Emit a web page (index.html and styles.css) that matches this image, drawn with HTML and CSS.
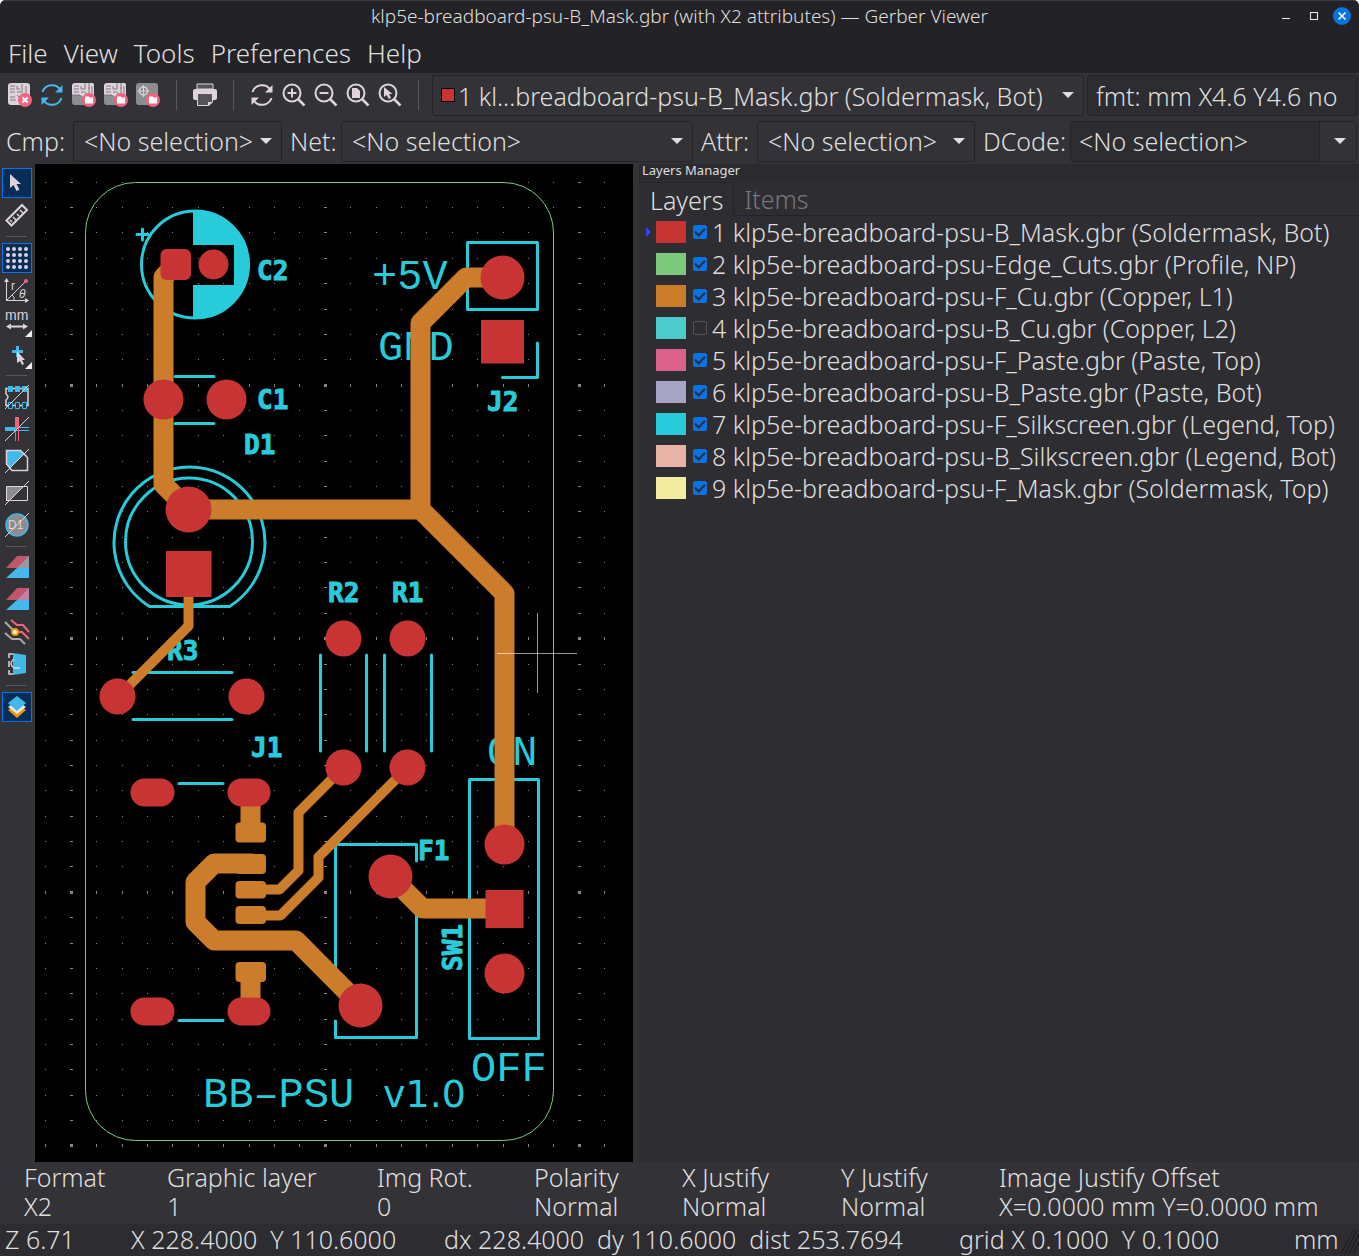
FILE: index.html
```html
<!DOCTYPE html>
<html lang="en">
<head>
<meta charset="utf-8">
<title>Gerber Viewer</title>
<link rel="stylesheet" href="styles.css">
</head>
<body>
<svg class="defs" aria-hidden="true">
  <symbol id="refresh" viewBox="0 0 24 24"><path d="M2.500 9A10 10 0 0 1 20.500 7M21.500 15A10 10 0 0 1 3.500 17" fill="none" stroke="currentColor" stroke-width="2"/><path d="M22.500 2v7.500h-7.500zM1.500 22v-7.500H9z" fill="currentColor"/></symbol>
  <symbol id="board" viewBox="0 0 24 24"><rect width="22" height="22" rx="3" fill="#8d8d8d"/><path d="M2 0h18a2 2 0 0 1 2 2v11h-6l-3 3-4-4H0V2z" fill="#ded3dd"/><path d="M2 3h5M2 6h5M2 9h5M9 3v3h4V0M9 9h4l2 3v4M17 0v10M20 3v8M0 12h8M16 5h2" stroke="#7e7a80" fill="none"/></symbol>
  <symbol id="folder" viewBox="0 0 24 24"><circle cx="17" cy="17" r="7" fill="#f2647e"/><path d="M13 13.500h3.500l1 1H21v6h-8z" fill="#fff"/></symbol>
  <symbol id="lens" viewBox="0 0 24 24"><circle cx="10" cy="10" r="8.500" fill="none" stroke="#ded3dd" stroke-width="2"/><path d="M16 16l6.500 6.500" stroke="#ded3dd" stroke-width="2.500"/></symbol>
  <symbol id="arrow" viewBox="0 0 12 6"><path d="M0 0h12L6 6z" fill="currentColor"/></symbol>
  <symbol id="pointer" viewBox="0 0 24 24"><path d="M7 4v14l3.500-3 3 6 3-1.500-3-5.500h4.500z" fill="#ded3dd"/></symbol>
</svg>
<div class="app">
  <header class="head">
    <div class="titlebar">
      <h1 class="title">klp5e-breadboard-psu-B_Mask.gbr (with X2 attributes) — Gerber Viewer</h1>
      <div class="window-buttons">
        <button class="win" aria-label="Minimize"><svg width="18" height="18"><path d="M5 11.500h8" stroke="#eee"/></svg></button>
        <button class="win" aria-label="Maximize"><svg width="18" height="18"><rect x="5.500" y="5.500" width="7" height="7" fill="none" stroke="#eee"/></svg></button>
        <button class="win" aria-label="Close"><svg width="18" height="18"><circle cx="9" cy="9" r="9" fill="#0b73df"/><path d="M5.500 5.500l7 7m0-7l-7 7" stroke="#fff" stroke-width="1.500"/></svg></button>
      </div>
    </div>
    <nav class="menu"><button>File</button><button>View</button><button>Tools</button><button>Preferences</button><button>Help</button></nav>
  </header>

  <div class="toolbar">
    <button class="tool" aria-label="Clear all layers"><svg class="icon"><rect width="22" height="22" rx="3" fill="#ded3dd"/><path d="M2 3h5M2 6h5M2 9h5M2 14h5M2 17h6M9 3v3h3M9 9h4M9 12l3 3M14 1v9M18 3v8" stroke="#7e7a80" fill="none"/><circle cx="17" cy="17" r="7" fill="#f2647e"/><path d="M14.500 14.500l5 5m0-5l-5 5" stroke="#fff" stroke-width="2"/></svg></button>
    <button class="tool blue" aria-label="Reload all layers"><svg class="icon"><use href="#refresh" width="24" height="24"/></svg></button>
    <button class="tool" aria-label="Open autodetected files"><svg class="icon"><use href="#board" width="24" height="24"/><use href="#folder" width="24" height="24"/></svg></button>
    <button class="tool" aria-label="Open Gerber files"><svg class="icon"><use href="#board" width="24" height="24"/><use href="#folder" width="24" height="24"/></svg></button>
    <button class="tool" aria-label="Open drill files"><svg class="icon"><rect width="22" height="22" rx="3" fill="#8d8d8d"/><circle cx="7.500" cy="8" r="4" fill="none" stroke="#ded3dd" stroke-width="1.500"/><path d="M7.500 2v12M1.500 8h12" stroke="#ded3dd"/><use href="#folder" width="24" height="24"/></svg></button>
    <span class="vsep"></span>
    <button class="tool" aria-label="Print"><svg class="icon"><path d="M4 1h16v5H4z" fill="#545357" stroke="#ded3dd"/><path d="M2 6h20a2 2 0 0 1 2 2v7a2 2 0 0 1-2 2H2a2 2 0 0 1-2-2V8a2 2 0 0 1 2-2z" fill="#ded3dd"/><path d="M4 11h16v8l-4 4H4z" fill="#545357"/><path d="M4.500 11v11.500h11l4-3.500v-8" fill="none" stroke="#ded3dd"/><path d="M15 23v-4h5z" fill="#ded3dd"/></svg></button>
    <span class="vsep"></span>
    <button class="tool pale" aria-label="Refresh"><svg class="icon"><use href="#refresh" width="24" height="24"/></svg></button>
    <button class="tool" aria-label="Zoom in"><svg class="icon"><use href="#lens" width="24" height="24"/><path d="M5.500 10h9M10 5.500v9" stroke="#ded3dd" stroke-width="2"/></svg></button>
    <button class="tool" aria-label="Zoom out"><svg class="icon"><use href="#lens" width="24" height="24"/><path d="M5.500 10h9" stroke="#ded3dd" stroke-width="2"/></svg></button>
    <button class="tool" aria-label="Zoom to fit"><svg class="icon"><use href="#lens" width="24" height="24"/><path d="M6 5h5l3 3v7H6z" fill="#ded3dd"/></svg></button>
    <button class="tool" aria-label="Zoom to selection"><svg class="icon"><use href="#lens" width="24" height="24"/><path d="M6 4v10l2.500-2 2.500 4 2-1-2-4h3.500z" fill="#ded3dd"/></svg></button>
    <span class="vsep"></span>
    <div class="fields">
      <div class="drop"><span class="chip"></span><select class="chipped" aria-label="Active layer"><option>1 kl...breadboard-psu-B_Mask.gbr (Soldermask, Bot)</option></select><svg class="arrow"><use href="#arrow"/></svg></div>
      <input class="box" aria-label="Format" readonly value="fmt: mm X4.6 Y4.6 no">
    </div>
  </div>

  <div class="filters">
    <label for="cmp">Cmp:</label>
    <div class="drop"><select id="cmp"><option>&lt;No selection&gt;</option></select><svg class="arrow"><use href="#arrow"/></svg></div>
    <label for="net">Net:</label>
    <div class="drop"><select id="net"><option>&lt;No selection&gt;</option></select><svg class="arrow"><use href="#arrow"/></svg></div>
    <label for="attr">Attr:</label>
    <div class="drop"><select id="attr"><option>&lt;No selection&gt;</option></select><svg class="arrow"><use href="#arrow"/></svg></div>
    <label for="dcode">DCode:</label>
    <div class="combo"><input id="dcode" value="&lt;No selection&gt;"><button aria-label="Show DCodes"><svg class="mark"><use href="#arrow"/></svg></button></div>
  </div>

  <main class="main">
    <div class="side">
      <button class="stool on" aria-label="Select"><svg class="icon"><use href="#pointer" x="-2" y="-1" width="24" height="24"/></svg></button>
      <button class="stool" aria-label="Measure"><svg class="icon"><path d="M1.500 17.500L17 2l5 5L6.500 22.500z" fill="none" stroke="#ded3dd" stroke-width="2"/><path d="M8 14l3 3M12 11l2 2M15 7l3 3M5 17l2 2" stroke="#ded3dd" stroke-width="1.500"/></svg></button>
      <span class="hsep"></span>
      <button class="stool on" aria-label="Show grid"><svg class="icon"><path d="M3 3h18.100M3 9h18.100M3 15h18.100M3 21h18.100" stroke="#ded3dd" stroke-width="4" stroke-linecap="round" stroke-dasharray="0 6"/></svg></button>
      <button class="stool" aria-label="Polar coordinates"><svg class="icon"><path d="M1.500 23V2M1 22.500h21M2 22L20 4M7 17q3 2 2 5" fill="none" stroke="#ded3dd"/><path d="M-1 4l2.500-4L4 4zM20 20l4 2.500L20 25z" fill="#ded3dd"/><circle cx="21" cy="3" r="2" fill="#f2647e"/><text class="glyph" x="6" y="12">r</text><text class="glyph slant" x="14" y="20">θ</text></svg></button>
      <button class="stool" aria-label="Millimeters"><svg class="icon"><text class="unit" x="0" y="10">mm</text><path d="M4 16.500h16" stroke="#ded3dd" stroke-width="2"/><path d="M1 16.500l5-3v6zM23 16.500l-5-3v6z" fill="#ded3dd"/><path d="M27 20v7h-7z" fill="#eee"/></svg></button>
      <button class="stool" aria-label="Full-window crosshair"><svg class="icon"><path d="M7 9.500h11M12.500 4v11" stroke="#42b8eb" stroke-width="3"/><path d="M12 9v12l3-2 2 4 2-1-2-4h3z" fill="#ded3dd"/><path d="M27 20v7h-7z" fill="#eee"/></svg></button>
      <span class="hsep"></span>
      <button class="stool" aria-label="Sketch flashed items"><svg class="icon"><path d="M1 3.500h22v17H1V15q4-3 0-6z" fill="none" stroke="#ded3dd" stroke-width="1.500"/><path d="M3 1h5v6H3zM10 1h5v6h-5zM17 1h5v6h-5z" fill="#42b8eb"/><path d="M3.500 17.500h4v6h-4zM10.500 17.500h4v6h-4zM17.500 17.500h4v6h-4z" fill="#333237" stroke="#42b8eb"/><path d="M0 24L24 0" stroke="#ded3dd"/></svg></button>
      <button class="stool" aria-label="Sketch lines"><svg class="icon"><path d="M0 12h12" stroke="#42b8eb" stroke-width="4"/><path d="M12 10.500h12M12 13.500h12" stroke="#42b8eb"/><path d="M12 0v12" stroke="#f2647e" stroke-width="4"/><path d="M10.500 12v12M13.500 12v12" stroke="#f2647e"/><path d="M0 24L24 0" stroke="#ded3dd"/></svg></button>
      <button class="stool" aria-label="Sketch polygons"><svg class="icon"><path d="M1 1h13l5 4L5 19l-4-4z" fill="#42b8eb"/><path d="M1.500 15V1.500h14l7 7v13H7z" fill="none" stroke="#ded3dd" stroke-width="1.500"/><path d="M0 24L24 0" stroke="#ded3dd"/></svg></button>
      <button class="stool" aria-label="Show negative objects"><svg class="icon"><path d="M1 5h18L4 20H1z" fill="#8d8d8d"/><path d="M1.500 5.500h21v14h-21zM0 24L24 0" fill="none" stroke="#ded3dd"/></svg></button>
      <button class="stool" aria-label="Show DCodes"><svg class="icon"><circle cx="12" cy="12" r="11" fill="#8d8d8d" stroke="#42b8eb" stroke-width="1.500"/><text class="glyph" x="3" y="16">D1</text><path d="M0 24L24 0" stroke="#ded3dd"/></svg></button>
      <span class="hsep"></span>
      <button class="stool" aria-label="Differential mode"><svg class="icon"><path d="M12 0h12v12H1z" fill="#bf566b"/><path d="M24 0v12H12z" fill="#969ba3"/><path d="M12 12h12v10H1z" fill="#42b8eb"/></svg></button>
      <button class="stool" aria-label="XOR mode"><svg class="icon"><path d="M12 0h12v12H1z" fill="#bf566b"/><path d="M24 0v12H12z" fill="#c481a4"/><path d="M12 12h12v10H1z" fill="#42b8eb"/></svg></button>
      <button class="stool" aria-label="High contrast mode"><svg class="icon"><path d="M6 0l6 5h6l6 7M10 12h7l7 7" fill="none" stroke="#f2647e" stroke-width="2"/><path d="M0 2l10 10M0 13l7 6h8l5 5" fill="none" stroke="#aaa9ab" stroke-width="2"/><circle cx="10" cy="12" r="3" fill="#fff" stroke="#f09800" stroke-width="2"/></svg></button>
      <button class="stool" aria-label="Flip view"><svg class="icon"><path d="M8 1l13 2v18L8 23z" fill="#42b8eb"/><path d="M8 2H4v4M4 18v4h4M4 9v6M9 7q-6 5 0 9h6" fill="none" stroke="#ded3dd" stroke-width="1.500"/></svg></button>
      <span class="hsep"></span>
      <button class="stool on" aria-label="Layers manager"><svg class="icon"><path d="M3 15l9 8 9-8-9-6z" fill="#f09800"/><path d="M3 12l9 7 9-7-9-6z" fill="#eee6ed"/><path d="M3 8l9-7 9 7-9 8z" fill="#42b8eb"/></svg></button>
    </div>

    <svg class="canvas" viewBox="35 164 598 998" role="img" aria-label="Board view">
      <g id="grid" class="grid"></g>
      <rect class="edge" x="85.500" y="182.500" width="468" height="958" rx="50"/>
      <g class="silk">
        <circle cx="195" cy="264.500" r="53.500"/>
        <path class="solid" d="M193 210h2a54.500 54.500 0 0 1 0 109h-2v-34h41v-40h-41z"/>
        <path d="M137 234.500h11M142.500 229v11M175 376.500h39M175 423.500h39"/>
        <path d="M149.500 606.500A75.500 75.500 0 1 1 229.500 606.500z"/>
        <circle cx="189" cy="541.500" r="63.500"/>
        <path d="M133 672.500h99M133 719.500h99M320.500 655v96M366.500 655v96M384.500 655v96M431.500 655v96"/>
        <path d="M467.500 242.500h70v67h-70zM537.500 343v34.500h-35"/>
        <path d="M469.500 779.500h69v259h-69zM179 783.500h44M179 1020.500h44"/>
        <path d="M335.500 990V844.500h81V861M416.500 912v125.500h-81V1021"/>
      </g>
      <g class="legend">
        <text x="372" y="289">+5V</text><text x="378" y="360">GND</text><text x="487" y="765">ON</text><text x="471" y="1081">OFF</text>
        <text x="203" y="1107">BB–PSU <tspan class="plain" x="383">v1.0</tspan></text>
      </g>
      <g class="refdes">
        <text x="257" y="280">C2</text><text x="257" y="409">C1</text><text x="244" y="454">D1</text><text x="487" y="411">J2</text>
        <text x="328" y="602">R2</text><text x="392" y="602">R1</text><text x="167" y="660">R3</text><text x="251" y="757">J1</text><text x="418" y="860">F1</text>
        <text transform="translate(462 971) rotate(-90)">SW1</text>
      </g>
      <g class="copper">
        <path d="M176 264.500L163.500 277V484.500L188.500 509.500H420.500M502.500 277.500H466L420.500 323V509.500L504.500 593.500V844M390.500 876.500L422.500 908.500H504M251 863.500H214L195.500 882V922L214 940.500H296L360.500 1005.500"/>
        <path class="stub" d="M250.500 792v40M250.500 972v40"/>
        <path class="thin" d="M188.500 574V626L117.500 697M343.500 767.500L298.500 812.500V870.500L279.500 889.500H251M407.500 767.500L318.500 857V877.500L280.500 915.500H251"/>
        <g class="pads"><rect x="235.500" y="822.500" width="30.500" height="20" rx="4"/><rect x="235.500" y="854" width="30.500" height="20" rx="4"/><rect x="235.500" y="881" width="30.500" height="17.500" rx="4"/><rect x="235.500" y="906" width="30.500" height="18" rx="4"/><rect x="235.500" y="962" width="30.500" height="20" rx="4"/></g>
      </g>
      <g class="mask">
        <rect x="160.500" y="249" width="30.500" height="31" rx="6"/><circle cx="213.500" cy="264.500" r="15"/>
        <circle cx="163.500" cy="399.500" r="20"/><circle cx="226.500" cy="399.500" r="20"/>
        <circle cx="502.500" cy="277.500" r="22"/><rect x="481" y="320" width="43" height="43.500"/>
        <circle cx="188.500" cy="509.500" r="23"/><rect x="166" y="551" width="45.500" height="46"/>
        <circle cx="117.500" cy="696.500" r="18"/><circle cx="246.500" cy="696.500" r="18"/>
        <circle cx="343.500" cy="638.500" r="18"/><circle cx="407.500" cy="638.500" r="18"/><circle cx="343.500" cy="767.500" r="18"/><circle cx="407.500" cy="767.500" r="18"/>
        <rect x="130.500" y="778.500" width="44" height="28" rx="14"/><rect x="227.500" y="778.500" width="43" height="28" rx="14"/>
        <rect x="130.500" y="997.500" width="44" height="28" rx="14"/><rect x="227.500" y="997.500" width="43" height="28" rx="14"/>
        <circle cx="390.500" cy="876.500" r="22"/><circle cx="360.500" cy="1005.500" r="22"/>
        <circle cx="504.500" cy="844.500" r="20"/><rect x="485.500" y="890" width="38" height="38"/><circle cx="504.500" cy="973.500" r="20"/>
      </g>
      <path class="cross" d="M497 653.500h80M537.500 613v80"/>
    </svg>

    <aside class="panel">
      <h2 class="panel-title">Layers Manager</h2>
      <div class="tabs" role="tablist"><button class="tab active" role="tab" aria-selected="true">Layers</button><button class="tab" role="tab" aria-selected="false">Items</button></div>
      <ul class="layers">
        <li class="current"><button class="swatch red" aria-label="Color 1"></button><label><input type="checkbox" checked>1 klp5e-breadboard-psu-B_Mask.gbr (Soldermask, Bot)</label></li>
        <li><button class="swatch green" aria-label="Color 2"></button><label><input type="checkbox" checked>2 klp5e-breadboard-psu-Edge_Cuts.gbr (Profile, NP)</label></li>
        <li><button class="swatch orange" aria-label="Color 3"></button><label><input type="checkbox" checked>3 klp5e-breadboard-psu-F_Cu.gbr (Copper, L1)</label></li>
        <li><button class="swatch teal" aria-label="Color 4"></button><label><input type="checkbox">4 klp5e-breadboard-psu-B_Cu.gbr (Copper, L2)</label></li>
        <li><button class="swatch pink" aria-label="Color 5"></button><label><input type="checkbox" checked>5 klp5e-breadboard-psu-F_Paste.gbr (Paste, Top)</label></li>
        <li><button class="swatch lilac" aria-label="Color 6"></button><label><input type="checkbox" checked>6 klp5e-breadboard-psu-B_Paste.gbr (Paste, Bot)</label></li>
        <li><button class="swatch cyan" aria-label="Color 7"></button><label><input type="checkbox" checked>7 klp5e-breadboard-psu-F_Silkscreen.gbr (Legend, Top)</label></li>
        <li><button class="swatch peach" aria-label="Color 8"></button><label><input type="checkbox" checked>8 klp5e-breadboard-psu-B_Silkscreen.gbr (Legend, Bot)</label></li>
        <li><button class="swatch yellow" aria-label="Color 9"></button><label><input type="checkbox" checked>9 klp5e-breadboard-psu-F_Mask.gbr (Soldermask, Top)</label></li>
      </ul>
    </aside>
  </main>

  <dl class="info">
    <div><dt>Format</dt><dd>X2</dd></div>
    <div><dt>Graphic layer</dt><dd>1</dd></div>
    <div><dt>Img Rot.</dt><dd>0</dd></div>
    <div><dt>Polarity</dt><dd>Normal</dd></div>
    <div><dt>X Justify</dt><dd>Normal</dd></div>
    <div><dt>Y Justify</dt><dd>Normal</dd></div>
    <div><dt>Image Justify Offset</dt><dd>X=0.0000 mm Y=0.0000 mm</dd></div>
  </dl>
  <footer class="status">
    <span>Z 6.71</span><span>X 228.4000&nbsp; Y 110.6000</span><span>dx 228.4000&nbsp; dy 110.6000&nbsp; dist 253.7694</span><span>grid X 0.1000&nbsp; Y 0.1000</span><span>mm</span>
    <svg class="grip"><path d="M0 24L12 0M4 24L16 0M8 24L18 4M12 24l6-12" stroke="#1d1d20"/></svg>
  </footer>
</div>
<script src="grid.js"></script>
</body>
</html>
```
FILE: grid.js
```js
// Draws the dot grid; every tenth row and column gets a longer mark.
const grid = document.getElementById('grid');
const ns = 'http://www.w3.org/2000/svg';
for (let row = 0; row < 39; row++) {
  for (let col = -1; col < 22; col++) {
    const x = Math.floor(71.3 + col * 25.4);
    const y = Math.floor(182.2 + row * 25.36);
    const w = col % 10 === 0 ? 3 : 1;
    const h = row % 10 === 8 ? 3 : 1;
    const dot = document.createElementNS(ns, 'rect');
    dot.setAttribute('x', x - (w - 1) / 2);
    dot.setAttribute('y', y - (h - 1) / 2);
    dot.setAttribute('width', w);
    dot.setAttribute('height', h);
    grid.appendChild(dot);
  }
}
```
FILE: styles.css
```css
* { box-sizing: border-box; }
html { background: #fff; }
body { margin: 0; font: 25px/32px "Noto Sans", "Open Sans", sans-serif; font-weight: 300; color: #dfdfdf; }
button, input, select { font: inherit; color: inherit; margin: 0; padding: 0; border: 0; background: none; border-radius: 0; }
h1, h2, ul, dl, dd { margin: 0; padding: 0; font-weight: inherit; }
.defs { position: absolute; width: 0; height: 0; }
.app { min-height: 100vh; display: flex; flex-direction: column; background: #333237; border-radius: 6px 6px 0 0; overflow: hidden; white-space: nowrap; }

.head { background: #232226; border-top: 1px solid #3c3c3e; }
.titlebar { display: grid; grid-template-columns: 1fr auto 1fr; height: 32px; align-items: center; padding: 0 8px 2px; }
.title { grid-column: 2; font-size: 19px; line-height: 24px; font-weight: 350; }
.window-buttons { display: flex; gap: 10px; justify-content: flex-end; }
.win { width: 18px; height: 18px; display: flex; }
.menu { display: flex; gap: 16px; height: 40px; align-items: center; padding: 0 8px; font-size: 26px; }

.toolbar { display: flex; align-items: flex-start; height: 45px; padding: 2px 1px 0 4px; }
.tool { width: 32px; height: 40px; flex: none; display: grid; place-items: center; }
.icon { width: 24px; height: 24px; overflow: visible; display: block; }
.blue { color: #42b8eb; }
.pale { color: #ded3dd; }
.vsep { width: 1px; height: 30px; margin: 5px 12px; background: #58575b; flex: none; }
.fields { flex: 1; display: grid; grid-template-columns: 652fr 271fr; gap: 3px; min-width: 0; margin-left: 1px; }
.drop { position: relative; display: flex; min-width: 0; }
.drop select { flex: 1; min-width: 0; appearance: none; height: 41px; padding: 0 10px; border: 1px solid #232226; border-radius: 3px; }
.drop .chipped { padding-left: 25px; }
.chip { position: absolute; left: 9px; top: 13px; width: 14px; height: 14px; background: #c83434; border: 1px solid #000; }
.arrow { position: absolute; right: 10px; top: 17px; width: 12px; height: 6px; pointer-events: none; }
.mark { width: 12px; height: 6px; }
.box { min-width: 0; height: 41px; padding: 0 8px; border: 1px solid #232226; border-radius: 3px; background: #2d2c31; }
.filters { display: grid; grid-template-columns: 67px 209fr 59px 352fr 64px 218fr 95px 287fr; align-items: center; height: 46px; padding: 0 2px 0 6px; }
.filters label:not(:first-child) { padding-left: 8px; }
.combo { display: flex; height: 41px; border: 1px solid #232226; border-radius: 3px; background: #2d2c31; min-width: 0; }
.combo input { flex: 1; min-width: 0; padding: 0 8px; }
.combo button { width: 37px; padding-left: 4px; display: grid; place-items: center; border-left: 1px solid #232226; background: #333237; }

.main { flex: 1; display: grid; grid-template-columns: 35px 598fr 726fr; }
.side { display: flex; flex-direction: column; gap: 2px; padding: 4px 2px; }
.stool { width: 30px; height: 30px; flex: none; display: grid; place-items: center; }
.stool.on { background: #052d58; border: 1px solid #0b73df; }
.hsep { height: 1px; margin: 4px 6px 4px 4px; background: #58575b; }
.glyph { font: 12px "Liberation Sans", sans-serif; fill: #ded3dd; }
.slant { font-style: italic; }
.unit { font: 14px "Liberation Sans", sans-serif; fill: #ded3dd; }
.canvas { display: block; width: 100%; height: 100%; background: #000; }
.grid { fill: #848484; shape-rendering: crispEdges; }
.edge { fill: none; stroke: #80c980; stroke-width: 1; }
.silk { fill: none; stroke: #28cbd9; stroke-width: 3; stroke-linecap: round; stroke-linejoin: round; }
.silk .solid { fill: #28cbd9; stroke: none; }
.legend { font: 42px "Liberation Mono", monospace; fill: #28cbd9; }
.plain { font: 38px "DejaVu Sans", sans-serif; }
.refdes { font: bold 26px "DejaVu Sans Mono", monospace; fill: #28cbd9; stroke: #28cbd9; stroke-width: 1; stroke-linejoin: round; }
.copper { fill: none; stroke: #cc7d2c; stroke-width: 20; stroke-linecap: round; stroke-linejoin: round; }
.copper .thin { stroke-width: 10; }
.copper .stub { stroke-linecap: butt; }
.pads { fill: #cc7d2c; stroke: none; }
.mask { fill: #c83434; }
.cross { stroke: #fff; stroke-opacity: .6; }

.panel { background: #2e2d32; border-left: 6px solid #333237; min-width: 0; }
.panel-title { font-size: 13px; line-height: 13px; font-weight: 400; padding: 0 0 3px 3px; background: #2b2a2e; }
.tabs { display: flex; height: 36px; padding-top: 2px; }
.tab { padding: 0 10px; border-bottom: 1px solid #232226; color: #77777b; }
.tab.active { padding-left: 11px; border: 1px solid #232226; border-bottom: 0; border-left: 0; color: #dfdfdf; }
.tabs::after { content: ""; flex: 1; border-bottom: 1px solid #232226; }
.layers { list-style: none; }
.layers li { display: flex; align-items: center; height: 32px; padding-left: 17px; position: relative; }
.current::before { content: ""; position: absolute; left: 7px; top: 11px; border: 5px solid transparent; border-left-color: #3d3df5; border-right: 0; }
.swatch { width: 30px; height: 22px; margin-right: 7px; }
.layers label { display: flex; align-items: center; gap: 5px; }
.layers input { appearance: none; width: 14px; height: 14px; border-radius: 2px; border: 1px solid #555457; flex: none; }
.layers input:checked { background: #0b73df; border-color: #0b73df; display: grid; place-items: center; }
.layers input:checked::before { content: ""; width: 8px; height: 4px; border: 2px solid #262c38; border-width: 0 0 2px 2px; transform: translateY(-1px) rotate(-45deg); }
.red { background: #c83434; }
.green { background: #7fc97f; }
.orange { background: #cc7d2c; }
.teal { background: #4ecbcb; }
.pink { background: #db628b; }
.lilac { background: #a7a5c6; }
.cyan { background: #28cbd9; }
.peach { background: #e8b2a7; }
.yellow { background: #f2eda1; }

.info { display: grid; grid-template-columns: 143fr 210fr 157fr 148fr 159fr 158fr 360fr; padding: 1px 0 3px 24px; line-height: 29px; }
.info div { min-width: 0; }
.status { display: grid; grid-template-columns: 126fr 313fr 515fr 335fr 65fr; position: relative; padding: 0 0 2px 5px; line-height: 30px; background: #2d2c31; }
.grip { position: absolute; right: 0; bottom: 2px; width: 18px; height: 24px; }
```
